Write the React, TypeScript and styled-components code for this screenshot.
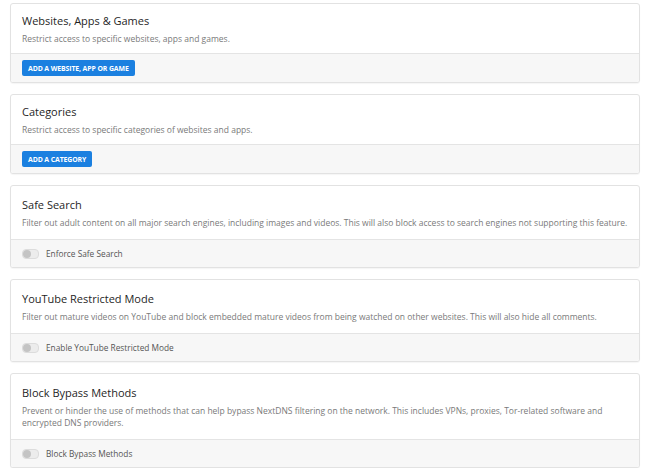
import React from 'react';
import styled, { createGlobalStyle } from 'styled-components';

const GlobalStyle = createGlobalStyle`
  body {
    margin: 0;
    background: #ffffff;
    font-family: 'Open Sans', 'Noto Sans', sans-serif;
  }
`;

const Page = styled.div`
  display: flex;
  flex-direction: column;
  gap: 11px;
  padding: 3px 10px 0;
`;

const Card = styled.section`
  background: #fff;
  border: 1px solid #e2e2e2;
  border-radius: 3px;
  box-shadow: 0 1px 1px rgba(0, 0, 0, 0.04);
  overflow: hidden;
`;

const CardBody = styled.div<{ $roomy?: boolean }>`
  padding: ${(p) => (p.$roomy ? '12px 11px 10px' : '10px 11px 8px')};
`;

const Title = styled.h3`
  margin: 0 0 5px;
  font-size: 11px;
  font-weight: 400;
  color: #1f1f1f;
  line-height: 14px;
`;

const Description = styled.p`
  margin: 0;
  font-size: 8.5px;
  color: #7a7a7a;
  line-height: 12px;
`;

const CardFooter = styled.div<{ $roomy?: boolean }>`
  display: flex;
  align-items: center;
  gap: 7px;
  height: ${(p) => (p.$roomy ? '27px' : '28px')};
  padding: 0 11px;
  background: #f7f7f7;
  border-top: 1px solid #e4e4e4;
`;

const Button = styled.button`
  height: 16px;
  padding: 0 6px;
  border: none;
  border-radius: 2px;
  background: #1b80e0;
  color: #fff;
  font-family: inherit;
  font-size: 6.9px;
  font-weight: 700;
  letter-spacing: -0.1px;
  text-transform: uppercase;
  cursor: pointer;
`;

const Track = styled.span`
  position: relative;
  display: inline-block;
  width: 15px;
  height: 8px;
  border-radius: 4px;
  background: #ececec;
  border: 1px solid #dcdcdc;
`;

const Knob = styled.span`
  position: absolute;
  left: 0;
  top: 0;
  width: 8px;
  height: 8px;
  border-radius: 50%;
  background: #c4c4c4;
`;

const ToggleLabel = styled.span`
  font-size: 8.3px;
  color: #555;
`;

type Section = {
  title: string;
  description: string;
  button?: string;
  toggle?: string;
};

const sections: Section[] = [
  {
    title: 'Websites, Apps & Games',
    description: 'Restrict access to specific websites, apps and games.',
    button: 'Add a website, app or game',
  },
  {
    title: 'Categories',
    description: 'Restrict access to specific categories of websites and apps.',
    button: 'Add a category',
  },
  {
    title: 'Safe Search',
    description:
      'Filter out adult content on all major search engines, including images and videos. This will also block access to search engines not supporting this feature.',
    toggle: 'Enforce Safe Search',
  },
  {
    title: 'YouTube Restricted Mode',
    description:
      'Filter out mature videos on YouTube and block embedded mature videos from being watched on other websites. This will also hide all comments.',
    toggle: 'Enable YouTube Restricted Mode',
  },
  {
    title: 'Block Bypass Methods',
    description:
      'Prevent or hinder the use of methods that can help bypass NextDNS filtering on the network. This includes VPNs, proxies, Tor-related software and encrypted DNS providers.',
    toggle: 'Block Bypass Methods',
  },
];

const Toggle: React.FC<{ label: string }> = ({ label }) => (
  <>
    <Track>
      <Knob />
    </Track>
    <ToggleLabel>{label}</ToggleLabel>
  </>
);

export default function App() {
  return (
    <>
      <GlobalStyle />
      <Page>
        {sections.map((s) => (
          <Card key={s.title}>
            <CardBody $roomy={!!s.toggle}>
              <Title>{s.title}</Title>
              <Description>{s.description}</Description>
            </CardBody>
            <CardFooter $roomy={!!s.toggle}>
              {s.button && <Button>{s.button}</Button>}
              {s.toggle && <Toggle label={s.toggle} />}
            </CardFooter>
          </Card>
        ))}
      </Page>
    </>
  );
}
